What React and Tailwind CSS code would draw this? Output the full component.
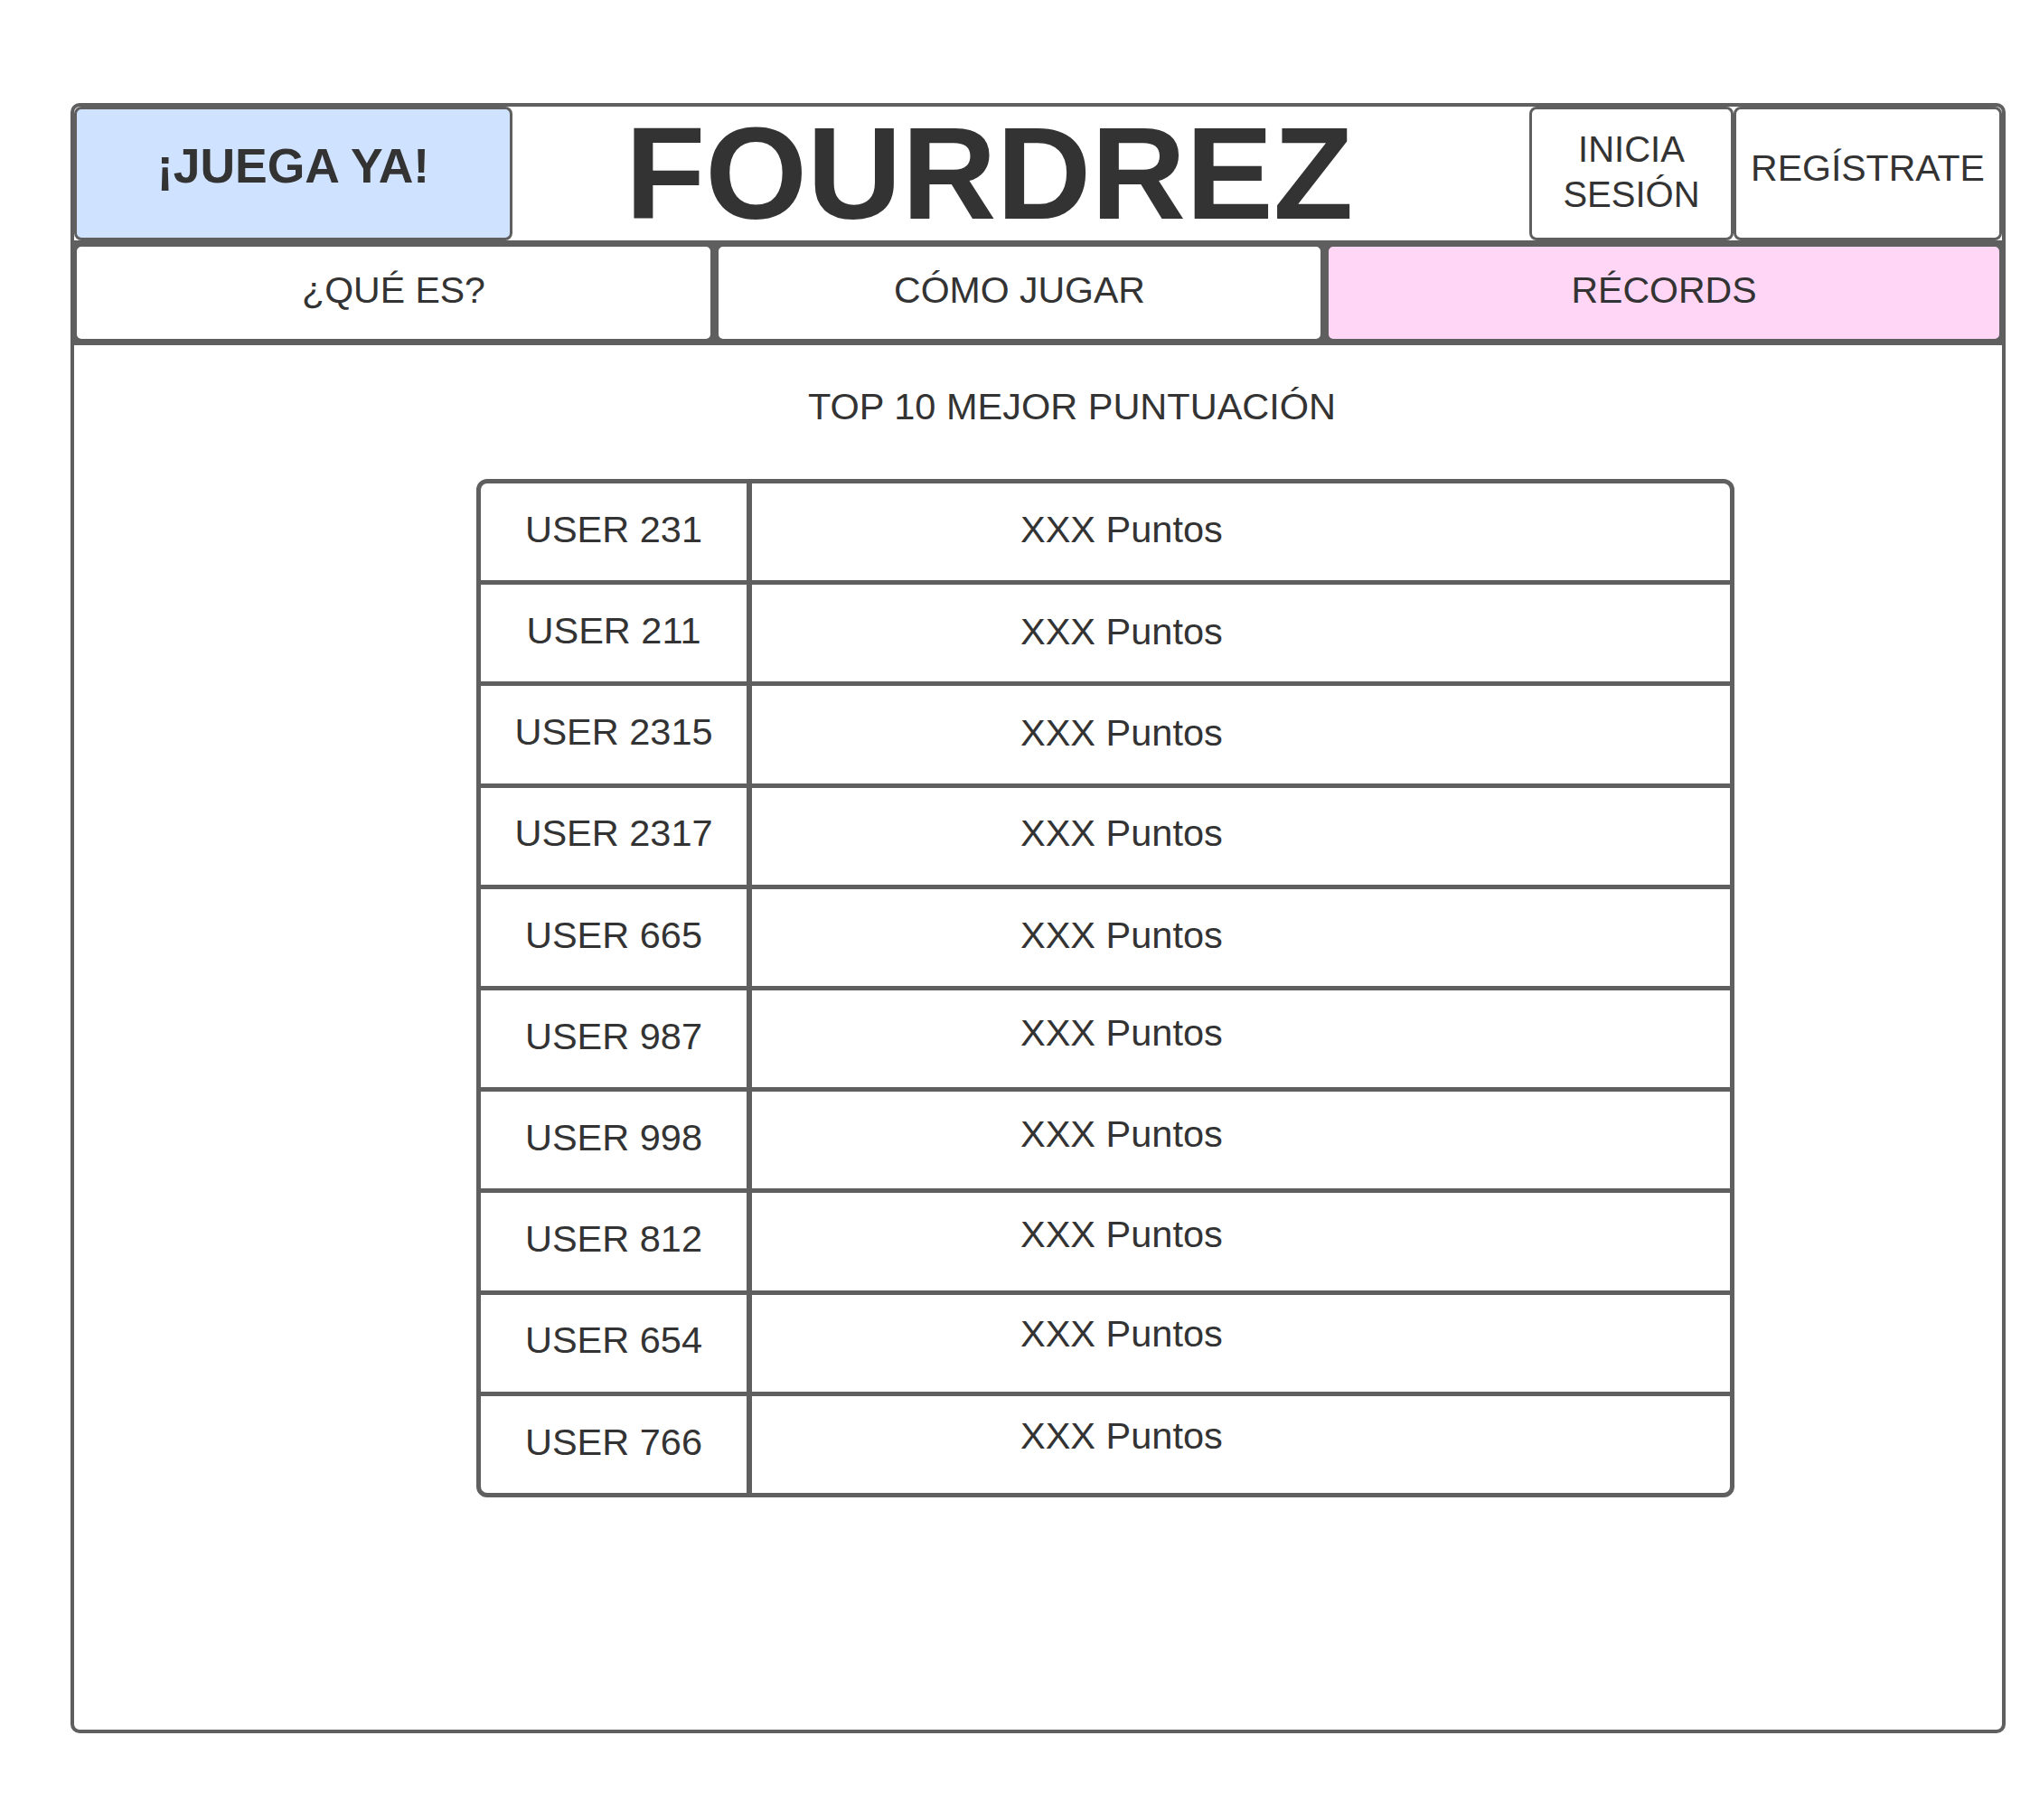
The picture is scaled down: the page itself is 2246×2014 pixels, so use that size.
const scores = [
  { user: 'USER 231', shift: 'pb-[5px]' },
  { user: 'USER 211', shift: 'pb-[5px]' },
  { user: 'USER 2315', shift: 'pb-[5px]' },
  { user: 'USER 2317', shift: 'pb-[7px]' },
  { user: 'USER 665', shift: 'pb-[5px]' },
  { user: 'USER 987', shift: 'pb-[13px]' },
  { user: 'USER 998', shift: 'pb-[14px]' },
  { user: 'USER 812', shift: 'pb-[16px]' },
  { user: 'USER 654', shift: 'pb-[20px]' },
  { user: 'USER 766', shift: 'pb-[19px]' },
];

const tabs = [
  { label: '¿QUÉ ES?', width: 'w-[707px]', bg: 'bg-white' },
  { label: 'CÓMO JUGAR', width: 'w-[672px]', bg: 'bg-white' },
  { label: 'RÉCORDS', width: 'flex-1', bg: 'bg-[#ffd6f5]' },
];

const App = () => {
  return (
    <div className="min-h-screen bg-white pt-[114px] pl-[78px] font-['Liberation_Sans',Arial,sans-serif] text-[#333333]">
      <div className="w-[2141px] h-[1804px] border-4 border-[#5f5f5f] rounded-[10px] flex flex-col">
        {/* Header */}
        <div className="h-[152px] flex border-b-4 border-[#5f5f5f] shrink-0">
          <div className="w-[485px] h-full border-[3px] border-[#5f5f5f] rounded-[8px] bg-[#cfe2ff] flex items-center justify-center pb-[16px]">
            <span className="text-[53.5px] font-bold leading-none">¡JUEGA YA!</span>
          </div>
          <div className="flex-1 flex items-center justify-center pr-[70px]">
            <h1 className="text-[145px] font-bold leading-[1.15]">FOURDREZ</h1>
          </div>
          <div className="w-[226px] h-full border-[3px] border-[#5f5f5f] rounded-[8px] flex items-center justify-center pb-[5px]">
            <span className="text-[40px] leading-[50px] text-center">
              INICIA
              <br />
              SESIÓN
            </span>
          </div>
          <div className="w-[297px] h-full border-[3px] border-[#5f5f5f] rounded-[8px] flex items-center justify-center pb-[11px]">
            <span className="text-[41px] leading-none">REGÍSTRATE</span>
          </div>
        </div>

        {/* Nav tabs */}
        <div className="h-[112px] flex gap-[3px] bg-[#5f5f5f] border-b-4 border-[#5f5f5f] shrink-0">
          {tabs.map((tab) => (
            <div
              key={tab.label}
              className={`${tab.width} ${tab.bg} h-full border-[3px] border-[#5f5f5f] rounded-[8px] flex items-center justify-center pb-[5px]`}
            >
              <span className="text-[41px] leading-none">{tab.label}</span>
            </div>
          ))}
        </div>

        {/* Records */}
        <div className="flex-1 flex flex-col">
          <h2 className="pt-[44px] pl-[75px] text-center text-[41.5px] leading-[48px]">
            TOP 10 MEJOR PUNTUACIÓN
          </h2>

          <div className="mt-[56px] ml-[445px] w-[1392px] h-[1127px] border-[5px] border-[#5f5f5f] rounded-[12px] flex flex-col overflow-hidden">
            {scores.map((row, i) => (
              <div
                key={row.user}
                className={`flex-1 flex ${i > 0 ? 'border-t-[5px] border-[#5f5f5f]' : ''}`}
              >
                <div className="w-[300px] border-r-[6px] border-[#5f5f5f] flex items-center justify-center pb-[6px]">
                  <span className="text-[41.5px] leading-none">{row.user}</span>
                </div>
                <div className={`flex-1 flex items-center pl-[297px] ${row.shift}`}>
                  <span className="text-[41.5px] leading-none">XXX Puntos</span>
                </div>
              </div>
            ))}
          </div>
        </div>
      </div>
    </div>
  );
};

export default App;
